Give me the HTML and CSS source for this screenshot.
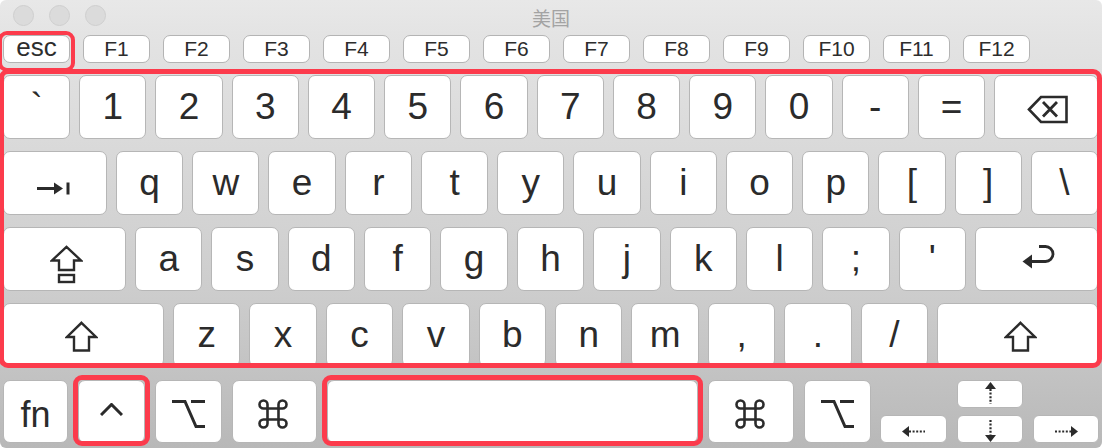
FILE: index.html
```html
<!DOCTYPE html>
<html lang="zh">
<head>
<meta charset="utf-8">
<title>美国</title>
<link rel="stylesheet" href="styles.css">
</head>
<body>
<div class="window">
  <div class="titlebar">
    <div class="lights"><span class="light"></span><span class="light"></span><span class="light"></span></div>
    <div class="title">美国</div>
    <div></div>
  </div>

  <div class="frow">
    <div class="hl hl-esc"><div class="fkey esc">esc</div></div>
    <div class="fkey">F1</div><div class="fkey">F2</div><div class="fkey">F3</div><div class="fkey">F4</div>
    <div class="fkey">F5</div><div class="fkey">F6</div><div class="fkey">F7</div><div class="fkey">F8</div>
    <div class="fkey">F9</div><div class="fkey">F10</div><div class="fkey">F11</div><div class="fkey">F12</div>
  </div>

  <div class="main hl hl-main">
    <div class="row">
      <div class="key">`</div><div class="key">1</div><div class="key">2</div><div class="key">3</div>
      <div class="key">4</div><div class="key">5</div><div class="key">6</div><div class="key">7</div>
      <div class="key">8</div><div class="key">9</div><div class="key">0</div><div class="key">-</div>
      <div class="key">=</div>
      <div class="key w104"><svg class="ic ic-bs" width="41" height="29" viewBox="0 0 41 29"><path d="M2 14.5 L14 2 H39.5 V27 H14 Z" fill="none" stroke="#2b2b2b" stroke-width="2.6"/><path d="M16 7 L30 21.5 M30 7 L16 21.5" stroke="#2b2b2b" stroke-width="2.8"/></svg></div>
    </div>
    <div class="row">
      <div class="key w104"><svg class="ic ic-tab" width="34" height="13" viewBox="0 0 34 13"><path d="M0 6.5 H20" stroke="#2b2b2b" stroke-width="3"/><path d="M17 0.5 L26 6.5 L17 12.5 Z" fill="#2b2b2b"/><rect x="29.5" y="0.5" width="3" height="12" fill="#2b2b2b"/></svg></div>
      <div class="key">q</div><div class="key">w</div><div class="key">e</div><div class="key">r</div>
      <div class="key">t</div><div class="key">y</div><div class="key">u</div><div class="key">i</div>
      <div class="key">o</div><div class="key">p</div><div class="key">[</div><div class="key">]</div>
      <div class="key">\</div>
    </div>
    <div class="row">
      <div class="key w123"><svg class="ic ic-caps" width="33" height="39" viewBox="0 0 33 39"><path d="M16.5 1.8 L31 15.5 H24 V25 H9 V15.5 H2 Z" fill="none" stroke="#2b2b2b" stroke-width="2.4"/><rect x="9" y="30" width="15" height="7" fill="none" stroke="#2b2b2b" stroke-width="2.4"/></svg></div>
      <div class="key">a</div><div class="key">s</div><div class="key">d</div><div class="key">f</div>
      <div class="key">g</div><div class="key">h</div><div class="key">j</div><div class="key">k</div>
      <div class="key">l</div><div class="key">;</div><div class="key">'</div>
      <div class="key w123"><svg class="ic ic-ret" width="34" height="27" viewBox="0 0 34 27"><path d="M7 17.5 H23.5 A7.5 7.5 0 0 0 23.5 2.5 H17" fill="none" stroke="#2b2b2b" stroke-width="2.8"/><path d="M0.5 17.5 L10 10.5 V24.5 Z" fill="#2b2b2b"/></svg></div>
    </div>
    <div class="row">
      <div class="key w161"><svg class="ic ic-shift-l" width="33" height="31" viewBox="0 0 33 31"><path d="M16.5 1.8 L31 16 H24 V29.5 H9 V16 H2 Z" fill="none" stroke="#2b2b2b" stroke-width="2.4"/></svg></div>
      <div class="key">z</div><div class="key">x</div><div class="key">c</div><div class="key">v</div>
      <div class="key">b</div><div class="key">n</div><div class="key">m</div><div class="key">,</div>
      <div class="key">.</div><div class="key">/</div>
      <div class="key w161"><svg class="ic ic-shift-r" width="33" height="31" viewBox="0 0 33 31"><path d="M16.5 1.8 L31 16 H24 V29.5 H9 V16 H2 Z" fill="none" stroke="#2b2b2b" stroke-width="2.4"/></svg></div>
    </div>
  </div>

  <div class="bottom">
    <div class="key k-fn"><span class="fn">fn</span></div>
    <div class="hl hl-ctrl"><div class="key k-ctrl"><svg class="ic ic-ctrl" width="23" height="13" viewBox="0 0 23 13"><path d="M1 12 L11.5 1.5 L22 12" fill="none" stroke="#2b2b2b" stroke-width="3"/></svg></div></div>
    <div class="key k-opt"><svg class="ic ic-opt" width="33" height="28" viewBox="0 0 33 28"><path d="M0 1.5 H13 L24 26.5 H33 M19 1.5 H33" fill="none" stroke="#2b2b2b" stroke-width="3"/></svg></div>
    <div class="key k-cmd"><svg class="ic ic-cmd" width="30" height="30" viewBox="0 0 30 30"><path d="M9.5 9.5 V5.5 A4 4 0 1 0 5.5 9.5 H24.5 A4 4 0 1 0 20.5 5.5 V24.5 A4 4 0 1 0 24.5 20.5 H5.5 A4 4 0 1 0 9.5 24.5 Z" fill="none" stroke="#2b2b2b" stroke-width="2.6"/></svg></div>
    <div class="hl hl-space"><div class="key k-space"></div></div>
    <div class="key k-cmd2"><svg class="ic ic-cmd" width="30" height="30" viewBox="0 0 30 30"><path d="M9.5 9.5 V5.5 A4 4 0 1 0 5.5 9.5 H24.5 A4 4 0 1 0 20.5 5.5 V24.5 A4 4 0 1 0 24.5 20.5 H5.5 A4 4 0 1 0 9.5 24.5 Z" fill="none" stroke="#2b2b2b" stroke-width="2.6"/></svg></div>
    <div class="key k-opt"><svg class="ic ic-opt" width="33" height="28" viewBox="0 0 33 28"><path d="M0 1.5 H13 L24 26.5 H33 M19 1.5 H33" fill="none" stroke="#2b2b2b" stroke-width="3"/></svg></div>
    <div class="arrows">
      <div class="key akey k-left"><svg class="ic ic-h" width="23" height="11" viewBox="0 0 23 11"><path d="M0 5.5 L7 0 V11 Z" fill="#2b2b2b"/><path d="M7 5.5 H23" stroke="#2b2b2b" stroke-width="2.2" stroke-dasharray="2 1.6"/></svg></div>
      <div class="acol">
        <div class="key akey k-ud"><svg class="ic ic-up" width="11" height="22" viewBox="0 0 11 22"><path d="M5.5 0 L11 7 H0 Z" fill="#2b2b2b"/><path d="M5.5 7 V22" stroke="#2b2b2b" stroke-width="2.2" stroke-dasharray="2 1.6"/></svg></div>
        <div class="key akey k-ud"><svg class="ic ic-down" width="11" height="22" viewBox="0 0 11 22"><path d="M5.5 22 L11 15 H0 Z" fill="#2b2b2b"/><path d="M5.5 0 V15" stroke="#2b2b2b" stroke-width="2.2" stroke-dasharray="2 1.6"/></svg></div>
      </div>
      <div class="key akey k-right"><svg class="ic ic-h" width="23" height="11" viewBox="0 0 23 11"><path d="M23 5.5 L16 0 V11 Z" fill="#2b2b2b"/><path d="M0 5.5 H16" stroke="#2b2b2b" stroke-width="2.2" stroke-dasharray="2 1.6"/></svg></div>
    </div>
  </div>
</div>
</body>
</html>
```

FILE: styles.css
```css
* { box-sizing: border-box; margin: 0; padding: 0; }
html, body { width: 1102px; height: 448px; background: #ffffff; overflow: hidden; }
body { font-family: "Liberation Sans", Arial, sans-serif; color: #2b2b2b; }

.window {
  width: 1102px;
  height: 448px;
  border-radius: 6px;
  overflow: hidden;
  background: linear-gradient(#e8e8e8 0px, #e3e3e3 40px, #d9d9d9 150px, #cdcdcd 290px, #c3c3c3 370px, #b8b8b8 448px);
}

.titlebar {
  height: 31px;
  display: grid;
  grid-template-columns: 1fr auto 1fr;
  align-items: center;
}
.lights { display: flex; gap: 15px; padding-left: 12.5px; }
.light {
  width: 21px; height: 21px; border-radius: 50%;
  background: #dbdbdb; border: 1px solid #cecece;
}
.title {
  font-family: "Noto Sans CJK SC", "Liberation Sans", sans-serif;
  font-size: 19px; line-height: 1; color: #a3a3a3; padding-top: 3px;
}

.frow { display: flex; gap: 13px; padding-left: 3px; margin-top: 4px; height: 28px; }
.fkey {
  width: 67px; height: 28px; background: #fff;
  border: 1.5px solid #b4b4b4; border-radius: 7px;
  display: flex; align-items: center; justify-content: center;
  font-size: 21px; color: #2d2d2d;
}
.fkey.esc { font-size: 26px; padding-bottom: 4px; }

/* highlight overlays */
.hl { position: relative; }
.hl::after {
  content: ""; position: absolute; pointer-events: none; z-index: 2;
  border: 5px solid #fc3b4c; border-radius: 9px;
}
.hl-esc::after { top: -4px; left: -5px; right: -5px; bottom: -9px; border-width: 4.5px; }
.hl-main::after { top: -6px; left: -4px; right: -4px; bottom: -1px; }
.hl-ctrl::after { top: -5px; left: -5px; right: -5px; bottom: -3px; }
.hl-space::after { top: -5px; left: -5px; right: -5px; bottom: -3px; }

.main { margin: 12px 0 0 3px; width: 1095px; display: flex; flex-direction: column; gap: 12px; }
.row { display: flex; gap: 9px; height: 64px; }
.key {
  flex: 1 1 0; min-width: 0; background: #fff;
  border: 1.5px solid #b6b6b6; border-radius: 7px;
  display: flex; align-items: center; justify-content: center;
  font-size: 37px; color: #2b2b2b;
}
.w104 { flex: 0 0 104px; }
.w123 { flex: 0 0 123px; }
.w161 { flex: 0 0 161px; }

.ic { display: block; }
.ic-bs { margin-top: 4px; margin-left: 2px; }
.ic-tab { margin-top: 10px; margin-right: 3px; }
.ic-caps { margin-top: 11px; margin-left: 3px; }
.ic-ret { margin-top: -3px; margin-left: 6px; }
.ic-shift-l { margin-left: -5px; margin-top: 3px; }
.ic-shift-r { margin-left: 5px; margin-top: 3px; }

.bottom { display: flex; gap: 10px; padding-left: 3px; margin-top: 13px; height: 63px; }
.bottom .key { flex: 0 0 auto; height: 63px; }
.k-fn { width: 65px; }
.fn { font-size: 36px; margin-top: 6px; }
.k-ctrl { width: 67px; }
.k-opt { width: 67px; }
.k-cmd { width: 85px; }
.k-cmd2 { width: 86px; }
.k-space { width: 371px; }
.ic-ctrl { margin-top: -5px; }
.ic-opt { margin-top: 4px; }
.ic-cmd { margin-top: 4px; margin-left: -3px; }

.arrows { display: flex; align-items: flex-end; gap: 10px; margin-left: -1px; }
.acol { display: flex; flex-direction: column; gap: 7px; }
.bottom .akey { height: 28px; border-radius: 6px; }
.k-left { width: 67px; }
.k-ud { width: 66px; }
.k-right { width: 66px; }
.ic-h { margin-top: 4px; }
.ic-up { margin-top: -3px; }
.ic-down { margin-top: 4px; }
```
